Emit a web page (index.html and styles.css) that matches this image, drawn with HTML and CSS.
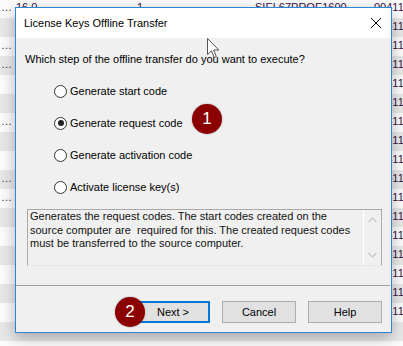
FILE: index.html
```html
<!DOCTYPE html>
<html lang="en">

<head>
    <meta charset="UTF-8">
    <title>License Keys Offline Transfer</title>
    <link rel="stylesheet" href="styles.css">
</head>

<body>

    <div class="list">
        <div class="row"><span class="c0">…</span><span class="c1">16.0</span><span class="c2">1</span><span class="c3">SIEL67PROE1600</span><span class="c4">00411</span></div>
        <div class="row"><span class="c0"></span><span class="c1">16.0</span><span class="c2">1</span><span class="c3">SIEL67PROE1600</span><span class="c4">00411</span></div>
        <div class="row"><span class="c0">…</span><span class="c1">16.0</span><span class="c2">1</span><span class="c3">SIEL67PROE1600</span><span class="c4">00411</span></div>
        <div class="row"><span class="c0">…</span><span class="c1">16.0</span><span class="c2">1</span><span class="c3">SIEL67PROE1600</span><span class="c4">00411</span></div>
        <div class="row"><span class="c0"></span><span class="c1">16.0</span><span class="c2">1</span><span class="c3">SIEL67PROE1600</span><span class="c4">00411</span></div>
        <div class="row"><span class="c0"></span><span class="c1">16.0</span><span class="c2">1</span><span class="c3">SIEL67PROE1600</span><span class="c4">00411</span></div>
        <div class="row"><span class="c0">…</span><span class="c1">16.0</span><span class="c2">1</span><span class="c3">SIEL67PROE1600</span><span class="c4">00411</span></div>
        <div class="row"><span class="c0"></span><span class="c1">16.0</span><span class="c2">1</span><span class="c3">SIEL67PROE1600</span><span class="c4">00411</span></div>
        <div class="row"><span class="c0"></span><span class="c1">16.0</span><span class="c2">1</span><span class="c3">SIEL67PROE1600</span><span class="c4">00411</span></div>
        <div class="row"><span class="c0">…</span><span class="c1">16.0</span><span class="c2">1</span><span class="c3">SIEL67PROE1600</span><span class="c4">00411</span></div>
        <div class="row"><span class="c0">…</span><span class="c1">16.0</span><span class="c2">1</span><span class="c3">SIEL67PROE1600</span><span class="c4">00411</span></div>
        <div class="row"><span class="c0"></span><span class="c1">16.0</span><span class="c2">1</span><span class="c3">SIEL67PROE1600</span><span class="c4">00411</span></div>
        <div class="row"><span class="c0"></span><span class="c1">16.0</span><span class="c2">1</span><span class="c3">SIEL67PROE1600</span><span class="c4">00411</span></div>
        <div class="row"><span class="c0"></span><span class="c1">16.0</span><span class="c2">1</span><span class="c3">SIEL67PROE1600</span><span class="c4">00411</span></div>
        <div class="row"><span class="c0"></span><span class="c1">16.0</span><span class="c2">1</span><span class="c3">SIEL67PROE1600</span><span class="c4">00411</span></div>
        <div class="row"><span class="c0"></span><span class="c1">16.0</span><span class="c2">1</span><span class="c3">SIEL67PROE1600</span><span class="c4">00411</span></div>
        <div class="row"><span class="c0"></span><span class="c1">16.0</span><span class="c2">1</span><span class="c3">SIEL67PROE1600</span><span class="c4">00411</span></div>
        <div class="row"><span class="c0"></span><span class="c1"></span><span class="c2"></span><span class="c3"></span><span class="c4"></span></div>
        <div class="row"><span class="c0"></span><span class="c1"></span><span class="c2"></span><span class="c3"></span><span class="c4"></span></div>
    </div>

    <div class="dialog">
        <div class="titlebar">
            <span class="title">License Keys Offline Transfer</span>
            <svg class="close" width="10" height="10" viewBox="0 0 10 10">
                <path d="M0 0 L10 10 M10 0 L0 10" stroke="#111" stroke-width="1" fill="none" />
            </svg>
        </div>

        <div class="content">
            <p class="question">Which step of the offline transfer do you want to execute?</p>

            <div class="options">
                <div class="option"><span class="radio"></span>Generate start code</div>
                <div class="option"><span class="radio checked"></span>Generate request code</div>
                <div class="option"><span class="radio"></span>Generate activation code</div>
                <div class="option"><span class="radio"></span>Activate license key(s)</div>
            </div>

            <div class="description">
                <div class="description-text">Generates the request codes. The start codes created on the<br>source computer are &nbsp;required for this. The created request codes<br>must be transferred to the source computer.</div>
                <div class="scrollbar">
                    <svg width="9" height="6" viewBox="0 0 9 6">
                        <path d="M0.5 5 L4.5 1 L8.5 5" stroke="#c4c4c4" stroke-width="1.2" fill="none" />
                    </svg>
                    <svg width="9" height="6" viewBox="0 0 9 6">
                        <path d="M0.5 1 L4.5 5 L8.5 1" stroke="#c4c4c4" stroke-width="1.2" fill="none" />
                    </svg>
                </div>
            </div>

            <div class="separator"></div>

            <div class="buttons">
                <span class="button default">Next &gt;</span>
                <span class="button">Cancel</span>
                <span class="button">Help</span>
            </div>
        </div>
    </div>

    <span class="badge badge-one">1</span>
    <span class="badge badge-two">2</span>

    <svg class="cursor" width="13" height="21" viewBox="0 0 13 21">
        <path d="M0.5 0.5 V16.5 L4.5 12.8 L7.2 19.5 L9.3 18.6 L6.7 12 H11.8 Z" fill="#fff" stroke="#555" stroke-width="1" stroke-linejoin="miter" />
    </svg>

</body>

</html>
```

FILE: styles.css
```css
body {
    margin: 0;
    width: 403px;
    height: 346px;
    overflow: hidden;
    position: relative;
    background: #fbfbfb;
    font-family: "Liberation Sans", Arial, sans-serif;
    font-size: 11px;
    color: #000;
}

/* list behind the dialog */
.list {
    margin-top: -1px;
}

.row {
    display: grid;
    grid-template-columns: 16px 121px 118px 119px 1fr;
    height: 19px;
    line-height: 16px;
    color: #3a1040;
    white-space: nowrap;
    overflow: hidden;
}

.row:nth-child(even) {
    background: #e8e8e8;
}

.c0 {
    padding-left: 1px;
    color: #333;
}

/* dialog window */
.dialog {
    position: absolute;
    left: 15px;
    top: 7px;
    width: 375px;
    height: 324px;
    border: 1px solid #2b86d6;
    background: #f0f0f0;
    box-shadow: 0 5px 14px rgba(0, 0, 0, 0.28);
    display: flex;
    flex-direction: column;
}

.titlebar {
    height: 30px;
    background: #fff;
    display: flex;
    align-items: center;
    justify-content: space-between;
    padding: 0 10px 0 8px;
}

.title {
    line-height: 30px;
}

.content {
    display: flex;
    flex-direction: column;
    flex: 1;
}

.question {
    margin: 14px 0 0 9px;
    line-height: 15px;
}

.options {
    margin-top: 8px;
    padding-left: 38px;
}

.option {
    height: 32px;
    display: flex;
    align-items: center;
    gap: 3px;
}

.radio {
    width: 11px;
    height: 11px;
    border: 1px solid #333;
    border-radius: 50%;
    background: #fff;
    position: relative;
}

.radio.checked::after {
    content: "";
    position: absolute;
    left: 2.5px;
    top: 2.5px;
    width: 6px;
    height: 6px;
    border-radius: 50%;
    background: #222;
}

.description {
    margin: 6px 0 0 11px;
    width: 353px;
    height: 55px;
    border: 1px solid #a9a9a9;
    border-bottom-color: #e6e6e6;
    display: flex;
}

.description-text {
    flex: 1;
    padding-left: 2px;
    line-height: 13.5px;
    color: #111;
    white-space: nowrap;
}

.scrollbar {
    width: 17px;
    border-left: 1px solid #fff;
    display: flex;
    flex-direction: column;
    align-items: center;
    justify-content: space-between;
    padding: 7px 0 7px;
}

.separator {
    margin: 19px 1px 0 0;
    height: 1px;
    background: #a0a0a0;
}

.buttons {
    margin-top: 15px;
    padding-right: 9px;
    display: flex;
    justify-content: flex-end;
    gap: 12px;
}

.button {
    width: 72px;
    height: 20px;
    border: 1px solid #adadad;
    background: #e1e1e1;
    display: flex;
    align-items: center;
    justify-content: center;
}

.button.default {
    width: 70px;
    height: 18px;
    border: 2px solid #0078d7;
}

/* numbered markers over the screenshot */
.badge {
    position: absolute;
    width: 30px;
    height: 30px;
    border-radius: 50%;
    background: #8b0000;
    color: #fff;
    font-size: 17px;
    line-height: 30px;
    text-align: center;
    box-shadow: 0 0 2px rgba(0, 0, 0, 0.35);
}

.badge-one {
    left: 192px;
    top: 104px;
}

.badge-two {
    left: 115px;
    top: 297px;
}

.cursor {
    position: absolute;
    left: 207px;
    top: 38px;
}
```
